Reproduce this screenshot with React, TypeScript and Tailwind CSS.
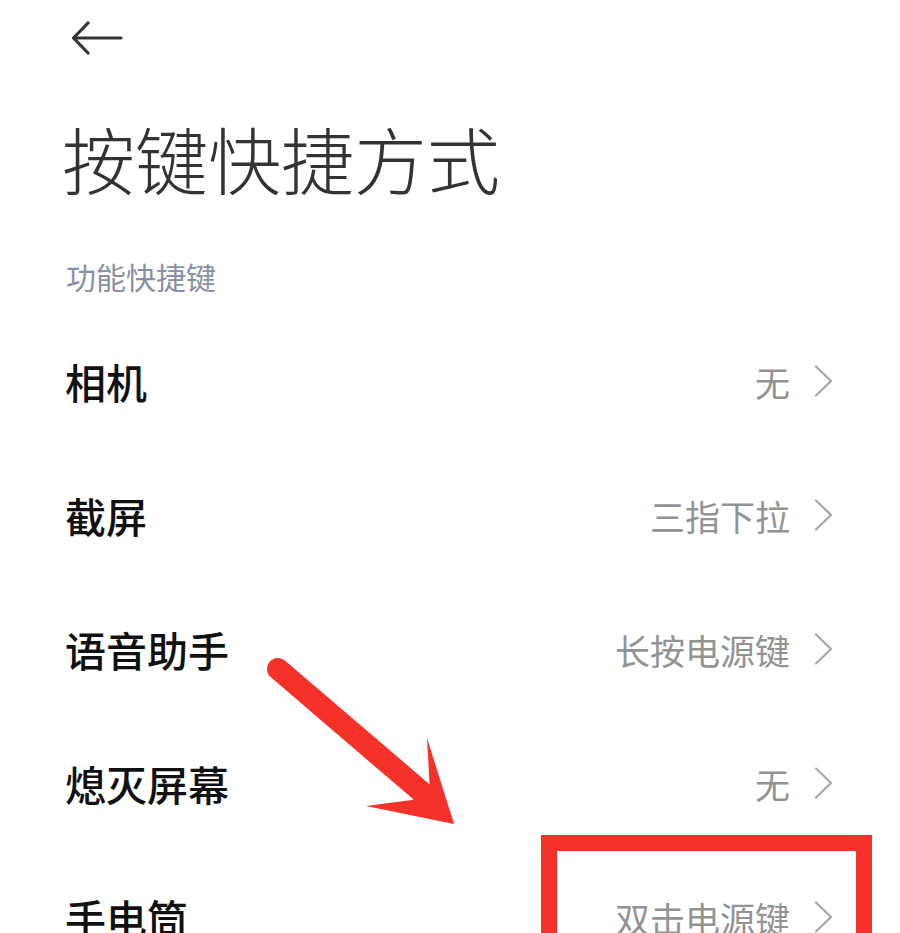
import React from "react";

const rows = [
  { label: "相机", value: "无" },
  { label: "截屏", value: "三指下拉" },
  { label: "语音助手", value: "长按电源键" },
  { label: "熄灭屏幕", value: "无" },
  { label: "手电筒", value: "双击电源键" },
];

function Chevron() {
  return (
    <svg width="20" height="32" viewBox="0 0 20 32" fill="none" className="shrink-0">
      <path d="M2 1.5 L17 16 L2 30.5" stroke="#a8a8a8" strokeWidth="2.2" strokeLinecap="round" strokeLinejoin="round" />
    </svg>
  );
}

export default function App() {
  return (
    <div
      className="relative w-[900px] h-[933px] overflow-hidden bg-white"
      style={{ fontFamily: '"Noto Sans CJK SC", "Noto Sans", sans-serif' }}
    >
      <div className="h-[76px] flex items-center pl-[71px]">
        <svg width="52" height="34" viewBox="0 0 52 34" fill="none">
          <path d="M50 17 H3" stroke="#333" strokeWidth="3.2" strokeLinecap="round" />
          <path d="M17 2 L2.5 17 L17 32" stroke="#333" strokeWidth="3.2" strokeLinecap="round" strokeLinejoin="round" />
        </svg>
      </div>
      <div className="h-[162px] flex items-center pl-[62px]">
        <h1 className="text-[73px] leading-[73px] font-light text-[#333]">按键快捷方式</h1>
      </div>
      <div className="h-[76px] flex items-center pl-[66px]">
        <span className="text-[30px] leading-[30px] text-[#8b8fa3]">功能快捷键</span>
      </div>
      <div className="flex flex-col">
        {rows.map((r) => (
          <div key={r.label} className="h-[134px] flex items-center justify-between pl-[65px] pr-[66px]">
            <span className="text-[41px] leading-[41px] font-medium text-[#111]">{r.label}</span>
            <div className="flex items-center gap-[24px]">
              <span className="text-[35px] leading-[35px] text-[#939393]">{r.value}</span>
              <Chevron />
            </div>
          </div>
        ))}
      </div>

      {/* annotation overlay */}
      <svg className="absolute left-0 top-0 pointer-events-none" width="900" height="933" viewBox="0 0 900 933">
        <line x1="278" y1="669" x2="424" y2="794" stroke="#f4322a" strokeWidth="22" strokeLinecap="round" />
        <path d="M454 824 L427 738 L430 792 L412 800 L366 806 Z" fill="#f4322a" />
      </svg>
      <div className="absolute left-[541px] top-[835px] w-[331px] h-[200px] border-[16px] border-[#f4322a]" />
    </div>
  );
}
